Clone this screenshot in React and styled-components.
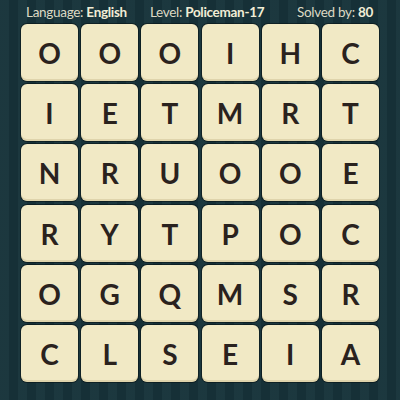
import styled, { createGlobalStyle } from "styled-components";

const GlobalStyle = createGlobalStyle`
  html, body {
    margin: 0;
    padding: 0;
  }
  body {
    width: 400px;
    height: 400px;
    overflow: hidden;
    background-color: #17333a;
    background-image: repeating-linear-gradient(
      90deg,
      rgba(255,255,255,0.025) 0px,
      rgba(255,255,255,0.025) 9px,
      rgba(0,0,0,0.06) 9px,
      rgba(0,0,0,0.06) 18px
    );
    font-family: Lato, "Open Sans", sans-serif;
  }
`;

const grid = [
  "OOOIHC",
  "IETMRT",
  "NRUOOE",
  "RYTPOC",
  "OGQMSR",
  "CLSEIA",
];

function App() {
  return (
    <>
      <GlobalStyle />
      <Page>
        <Header>
          <Info>Language: <b>English</b></Info>
          <Info $gap="23px">Level: <b>Policeman-17</b></Info>
          <Info $gap="auto">Solved by: <b>80</b></Info>
        </Header>
        <Board>
          {grid.map((row, r) =>
            row.split("").map((ch, c) => <Tile key={r + "-" + c}>{ch}</Tile>)
          )}
        </Board>
      </Page>
    </>
  );
}

const Page = styled.div`
  width: 400px;
  height: 400px;
  padding: 0 21px;
  box-sizing: border-box;
`;

const Header = styled.div`
  display: flex;
  align-items: center;
  height: 23px;
  padding: 0 6px 0 5px;
  color: #dcd9c4;
  font-size: 13.5px;
  letter-spacing: -0.3px;
  b {
    font-weight: 700;
    color: #f1edd6;
  }
`;

const Info = styled.span`
  white-space: nowrap;
  margin-left: ${(p) => p.$gap || "0"};
`;

const Board = styled.div`
  display: grid;
  grid-template-columns: repeat(6, 57px);
  grid-auto-rows: 57px;
  column-gap: 3.2px;
  row-gap: 3.2px;
  margin-top: 1px;
`;

const Tile = styled.div`
  display: flex;
  align-items: center;
  justify-content: center;
  background: #f1e9c5;
  border-radius: 6px;
  box-shadow: 0 0 0 1px rgba(8, 20, 22, 0.6), inset 0 -2px 0 rgba(170, 150, 100, 0.25);
  color: #2a221e;
  font-size: 28px;
  font-weight: 700;
  padding-top: 1px;
`;

export default App;
